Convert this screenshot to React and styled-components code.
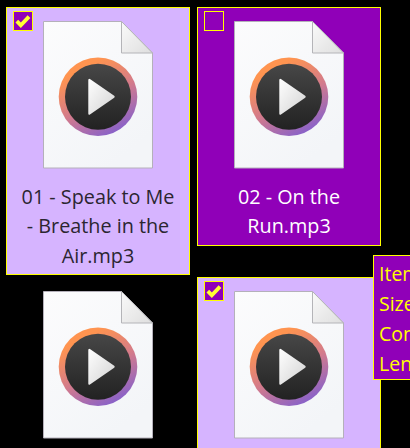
import React from "react";
import styled, { createGlobalStyle } from "styled-components";

const Global = createGlobalStyle`
  html, body { margin: 0; padding: 0; background: #000; overflow: hidden; }
  body { font-family: "Open Sans", "Noto Sans", "Liberation Sans", sans-serif; }
`;
const Page = styled.div`
  position: relative;
  width: 410px;
  height: 448px;
  overflow: hidden;
  background: #000;
`;
const Grid = styled.div`
  display: grid;
  grid-template-columns: 184px 184px;
  column-gap: 7px;
  row-gap: 2px;
  padding: 7px 0 0 6px;
  align-items: start;
`;
const Card = styled.div`
  box-sizing: border-box;
  width: 184px;
  min-height: ${(p) => p.$minH || 0}px;
  border: 1px solid ${(p) => (p.$variant === "plain" ? "#000" : "#ffff00")};
  background: ${(p) =>
    p.$variant === "checked" ? "#d6b4ff" : p.$variant === "hover" ? "#9000b8" : "#000"};
  padding: 13px 6px 4px;
  display: flex;
  flex-direction: column;
  align-items: center;
  position: relative;
`;
const Check = styled.div`
  position: absolute;
  left: 6px;
  top: 3px;
  box-sizing: border-box;
  width: 20px;
  height: 20px;
  border: 1px solid #ffff00;
  background: ${(p) => (p.$on ? "#9000b8" : "transparent")};
  display: flex;
  align-items: center;
  justify-content: center;
`;
const Label = styled.div`
  width: 160px;
  margin-top: 13px;
  text-align: center;
  font-size: 19.8px;
  line-height: 29.33px;
  color: ${(p) => (p.$light ? "#ffffff" : "#2b2630")};
`;
const Tooltip = styled.div`
  position: absolute;
  left: 373px;
  top: 255px;
  box-sizing: border-box;
  width: 240px;
  height: 125px;
  border: 1px solid #ffff00;
  background: #9000b8;
  color: #ffff00;
  padding: 3px 5px;
  font-size: 19.5px;
  line-height: 30px;
  white-space: nowrap;
`;

function FileIcon({ id }) {
  return (
    <svg width="112" height="148" viewBox="0 0 112 148" style={{ display: "block" }}>
      <defs>
        <linearGradient id={`p${id}`} x1="0" y1="0" x2="0.6" y2="1">
          <stop offset="0" stopColor="#fcfcfd" />
          <stop offset="1" stopColor="#f3f5f8" />
        </linearGradient>
        <linearGradient id={`f${id}`} x1="0" y1="0" x2="1" y2="1">
          <stop offset="0" stopColor="#fafafa" />
          <stop offset="1" stopColor="#dedede" />
        </linearGradient>
        <linearGradient id={`r${id}`} x1="0.25" y1="0.08" x2="0.72" y2="0.95">
          <stop offset="0.08" stopColor="#ff9450" />
          <stop offset="0.55" stopColor="#d27a8c" />
          <stop offset="1" stopColor="#8a62c8" />
        </linearGradient>
        <linearGradient id={`d${id}`} x1="0" y1="0" x2="0" y2="1">
          <stop offset="0" stopColor="#474747" />
          <stop offset="1" stopColor="#222222" />
        </linearGradient>
        <linearGradient id={`t${id}`} x1="0" y1="0" x2="1" y2="1">
          <stop offset="0" stopColor="#ffffff" />
          <stop offset="1" stopColor="#d2d2d2" />
        </linearGradient>
      </defs>
      <path d="M1.5 .5H79.5L110.5 32V147H1.5Z" fill={`url(#p${id})`} stroke="#b4b0ba" />
      <path d="M79.5 .5L110.5 32H79.5Z" fill={`url(#f${id})`} stroke="#b4b4b8" />
      <circle cx="56" cy="75.7" r="39.3" fill={`url(#r${id})`} />
      <circle cx="56" cy="75.7" r="33" fill={`url(#d${id})`} />
      <path
        d="M46.3 59.2 Q46.3 56.8 48.3 58.2 L72.2 74.7 Q73.4 75.7 72.2 76.7 L48.3 93.3 Q46.3 94.7 46.3 92.4Z"
        fill={`url(#t${id})`}
      />
    </svg>
  );
}

function CheckMark() {
  return (
    <svg width="16" height="14" viewBox="0 0 16 14">
      <path d="M1.8 7.2L5.8 11.2L14 2.6" fill="none" stroke="#ffff33" strokeWidth="3.8" />
    </svg>
  );
}

export default function App() {
  return (
    <Page>
      <Global />
      <Grid>
        <Card $variant="checked">
          <Check $on>
            <CheckMark />
          </Check>
          <FileIcon id="a" />
          <Label>01 - Speak to Me - Breathe in the Air.mp3</Label>
        </Card>
        <Card $variant="hover">
          <Check />
          <FileIcon id="b" />
          <Label $light>02 - On the Run.mp3</Label>
        </Card>
        <Card $variant="plain">
          <FileIcon id="c" />
        </Card>
        <Card $variant="checked" $minH={200}>
          <Check $on>
            <CheckMark />
          </Check>
          <FileIcon id="d" />
        </Card>
      </Grid>
      <Tooltip>
        Item type: MP3 File
        <br />
        Size: 5.2 MB
        <br />
        Contributing artists: Pink Floyd
        <br />
        Length: 00:03:57
      </Tooltip>
    </Page>
  );
}
